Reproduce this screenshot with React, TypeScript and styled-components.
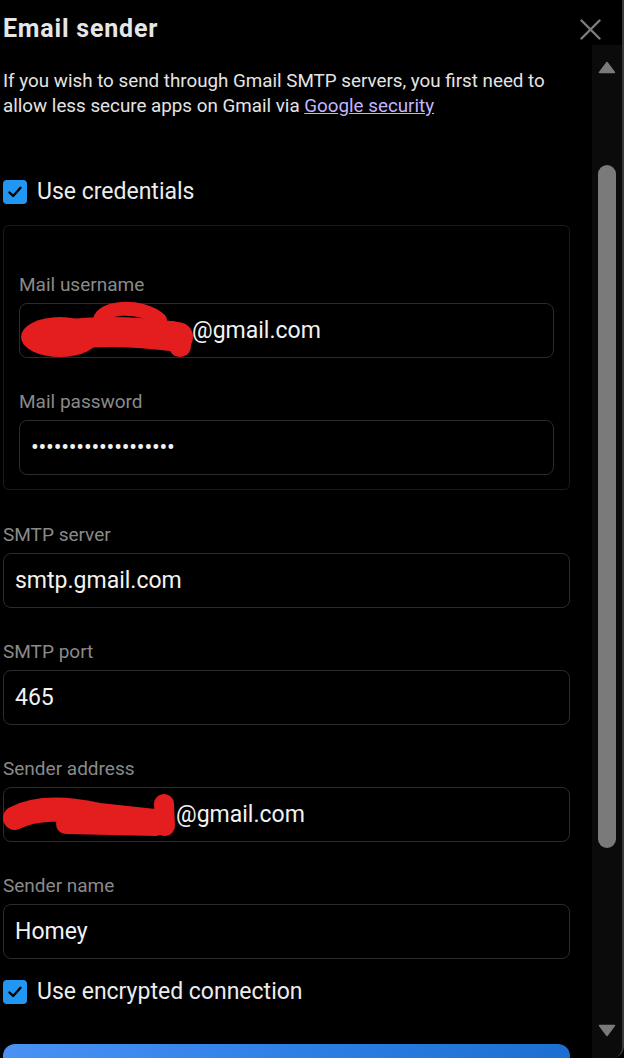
import React from "react";
import styled, { createGlobalStyle } from "styled-components";

const GlobalStyle = createGlobalStyle`
  html, body {
    margin: 0;
    padding: 0;
    background: #000;
  }
  body {
    font-family: Roboto, "Noto Sans", "Liberation Sans", Arial, sans-serif;
    -webkit-font-smoothing: antialiased;
  }
  * { box-sizing: border-box; }
`;

const Root = styled.div`
  width: 624px;
  height: 1058px;
  background: #000;
  border-right: 2px solid #3a3a3a;
  border-bottom-right-radius: 12px;
  display: flex;
  flex-direction: column;
  overflow: hidden;
`;

const Header = styled.header`
  height: 45px;
  flex-shrink: 0;
  display: flex;
  align-items: flex-start;
  justify-content: space-between;
  padding: 0 21px 0 3px;
`;

const Title = styled.h1`
  margin: 14px 0 0;
  font-size: 25px;
  line-height: 30px;
  font-weight: 700;
  letter-spacing: 0.8px;
  color: #e6e6e6;
`;

const CloseButton = styled.button`
  margin-top: 19px;
  width: 21px;
  height: 21px;
  padding: 0;
  border: 0;
  background: none;
  display: block;
  cursor: pointer;
`;

const Body = styled.div`
  flex: 1;
  min-height: 0;
  display: flex;
`;

const Content = styled.main`
  flex: 1;
  min-width: 0;
  overflow: hidden;
  padding: 24px 22px 0 3px;
  display: flex;
  flex-direction: column;
`;

const Description = styled.p`
  margin: 0;
  font-size: 18.8px;
  line-height: 25px;
  color: #e4e4e4;
`;

const Link = styled.a`
  color: #c4b5fd;
  text-decoration: underline;
`;

const CheckRow = styled.label<{ $mt: number }>`
  margin-top: ${(p) => p.$mt}px;
  display: flex;
  align-items: center;
  gap: 10px;
  height: 27px;
  font-size: 23px;
  line-height: 27px;
  color: #ececec;
`;

const CheckBox = styled.span`
  width: 24px;
  height: 24px;
  border-radius: 4px;
  background: #2196f3;
  display: flex;
  align-items: center;
  justify-content: center;
  flex-shrink: 0;
`;

const Panel = styled.section`
  margin-top: 20px;
  border: 1px solid #1c1c1c;
  border-radius: 6px;
  padding: 48px 15px 14px 15px;
  display: flex;
  flex-direction: column;
  gap: 33px;
`;

const FieldStack = styled.div`
  margin-top: 34px;
  display: flex;
  flex-direction: column;
  gap: 33px;
`;

const Field = styled.div`
  display: flex;
  flex-direction: column;
  gap: 7px;
`;

const Label = styled.div`
  font-size: 19px;
  line-height: 22px;
  color: #8a8a8a;
`;

const InputBox = styled.div`
  position: relative;
  height: 55px;
  flex-shrink: 0;
  border: 1px solid #2c2c2c;
  border-radius: 8px;
  padding: 0 11px;
  display: flex;
  align-items: center;
  font-size: 23px;
  color: #f2f2f2;
  white-space: nowrap;
`;

const Hidden = styled.span`
  display: inline-block;
  width: 161px;
  flex-shrink: 0;
`;

const Scribble = styled.svg`
  position: absolute;
  left: 0;
  top: 0;
  overflow: visible;
  pointer-events: none;
`;

const Bullets = styled.span`
  font-size: 23px;
  letter-spacing: -0.2px;
`;

const PrimaryButton = styled.button`
  margin-top: 39px;
  flex-shrink: 0;
  height: 50px;
  width: 100%;
  border: 0;
  border-radius: 12px 12px 0 0;
  background: linear-gradient(90deg, #4a92f4 0%, #2f80e6 50%, #1c6fd0 100%);
`;

const Track = styled.div`
  width: 30px;
  flex-shrink: 0;
  background: #0b0b0b;
  display: flex;
  flex-direction: column;
  align-items: center;
  padding-top: 16px;
`;

const Arrow = styled.svg<{ $down?: boolean }>`
  display: block;
  flex-shrink: 0;
  margin-top: ${(p) => (p.$down ? "auto" : "0")};
  margin-bottom: ${(p) => (p.$down ? "21px" : "0")};
`;

const Thumb = styled.div`
  margin-top: 91px;
  width: 18px;
  height: 683px;
  border-radius: 9px;
  background: #7a7a7a;
  flex-shrink: 0;
`;

const Check = () => (
  <svg width="16" height="16" viewBox="0 0 16 16">
    <path d="M2.5 8.5 L6.2 12 L13.5 3.8" fill="none" stroke="#000" strokeWidth="2.4" strokeLinecap="round" strokeLinejoin="round" />
  </svg>
);

const UserScribble = () => (
  <Scribble width="180" height="55" viewBox="0 0 180 55">
    <g fill="#e41e1e" stroke="#e41e1e" strokeLinecap="round" strokeLinejoin="round">
      <ellipse cx="40" cy="33" rx="39" ry="20" stroke="none" />
      <path d="M45 31 C 80 26, 120 28, 158 33" fill="none" strokeWidth="30" />
      <path d="M80 20 C 76 2, 122 -1, 140 16" fill="none" strokeWidth="14" />
      <path d="M152 28 L 160 42" fill="none" strokeWidth="22" />
    </g>
  </Scribble>
);

const SenderScribble = () => (
  <Scribble width="175" height="55" viewBox="0 0 175 55">
    <g fill="none" stroke="#e41e1e" strokeLinecap="round" strokeLinejoin="round">
      <path d="M11 30 C 30 20, 60 19, 95 27 L 150 33" strokeWidth="24" />
      <path d="M62 36 L 152 38" strokeWidth="20" />
      <path d="M160 16 L 161 38" strokeWidth="20" />
    </g>
  </Scribble>
);

const Redacted: React.FC<{ kind: "user" | "sender" }> = ({ kind }) => (
  <>
    <Hidden aria-label="redacted" />
    {kind === "user" ? <UserScribble /> : <SenderScribble />}
  </>
);

const fields = [
  { label: "SMTP server", value: "smtp.gmail.com" },
  { label: "SMTP port", value: "465" },
];

export default function App() {
  return (
    <>
      <GlobalStyle />
      <Root>
        <Header>
          <Title>Email sender</Title>
          <CloseButton aria-label="Close">
            <svg width="21" height="21" viewBox="0 0 21 21">
              <path d="M1.5 1.5 L19.5 19.5 M19.5 1.5 L1.5 19.5" stroke="#7d7d7d" strokeWidth="2.4" strokeLinecap="round" />
            </svg>
          </CloseButton>
        </Header>
        <Body>
          <Content>
            <Description>
              If you wish to send through Gmail SMTP servers, you first need to allow less secure apps on Gmail via{" "}
              <Link href="#">Google security</Link>
            </Description>

            <CheckRow $mt={59}>
              <CheckBox>
                <Check />
              </CheckBox>
              Use credentials
            </CheckRow>

            <Panel>
              <Field>
                <Label>Mail username</Label>
                <InputBox>
                  <Redacted kind="user" />
                  @gmail.com
                </InputBox>
              </Field>
              <Field>
                <Label>Mail password</Label>
                <InputBox>
                  <Bullets>{"•".repeat(19)}</Bullets>
                </InputBox>
              </Field>
            </Panel>

            <FieldStack>
              {fields.map((f) => (
                <Field key={f.label}>
                  <Label>{f.label}</Label>
                  <InputBox>{f.value}</InputBox>
                </Field>
              ))}
              <Field>
                <Label>Sender address</Label>
                <InputBox>
                  <Redacted kind="sender" />
                  @gmail.com
                </InputBox>
              </Field>
              <Field>
                <Label>Sender name</Label>
                <InputBox>Homey</InputBox>
              </Field>
            </FieldStack>

            <CheckRow $mt={19}>
              <CheckBox>
                <Check />
              </CheckBox>
              Use encrypted connection
            </CheckRow>

            <PrimaryButton aria-label="Save" />
          </Content>
          <Track>
            <Arrow width="18" height="13" viewBox="0 0 18 13">
              <path d="M9 1.5 L16.5 11.5 L1.5 11.5 Z" fill="#7a7a7a" stroke="#7a7a7a" strokeWidth="1.5" strokeLinejoin="round" />
            </Arrow>
            <Thumb />
            <Arrow $down width="18" height="13" viewBox="0 0 18 13">
              <path d="M9 11.5 L16.5 1.5 L1.5 1.5 Z" fill="#7a7a7a" stroke="#7a7a7a" strokeWidth="1.5" strokeLinejoin="round" />
            </Arrow>
          </Track>
        </Body>
      </Root>
    </>
  );
}
